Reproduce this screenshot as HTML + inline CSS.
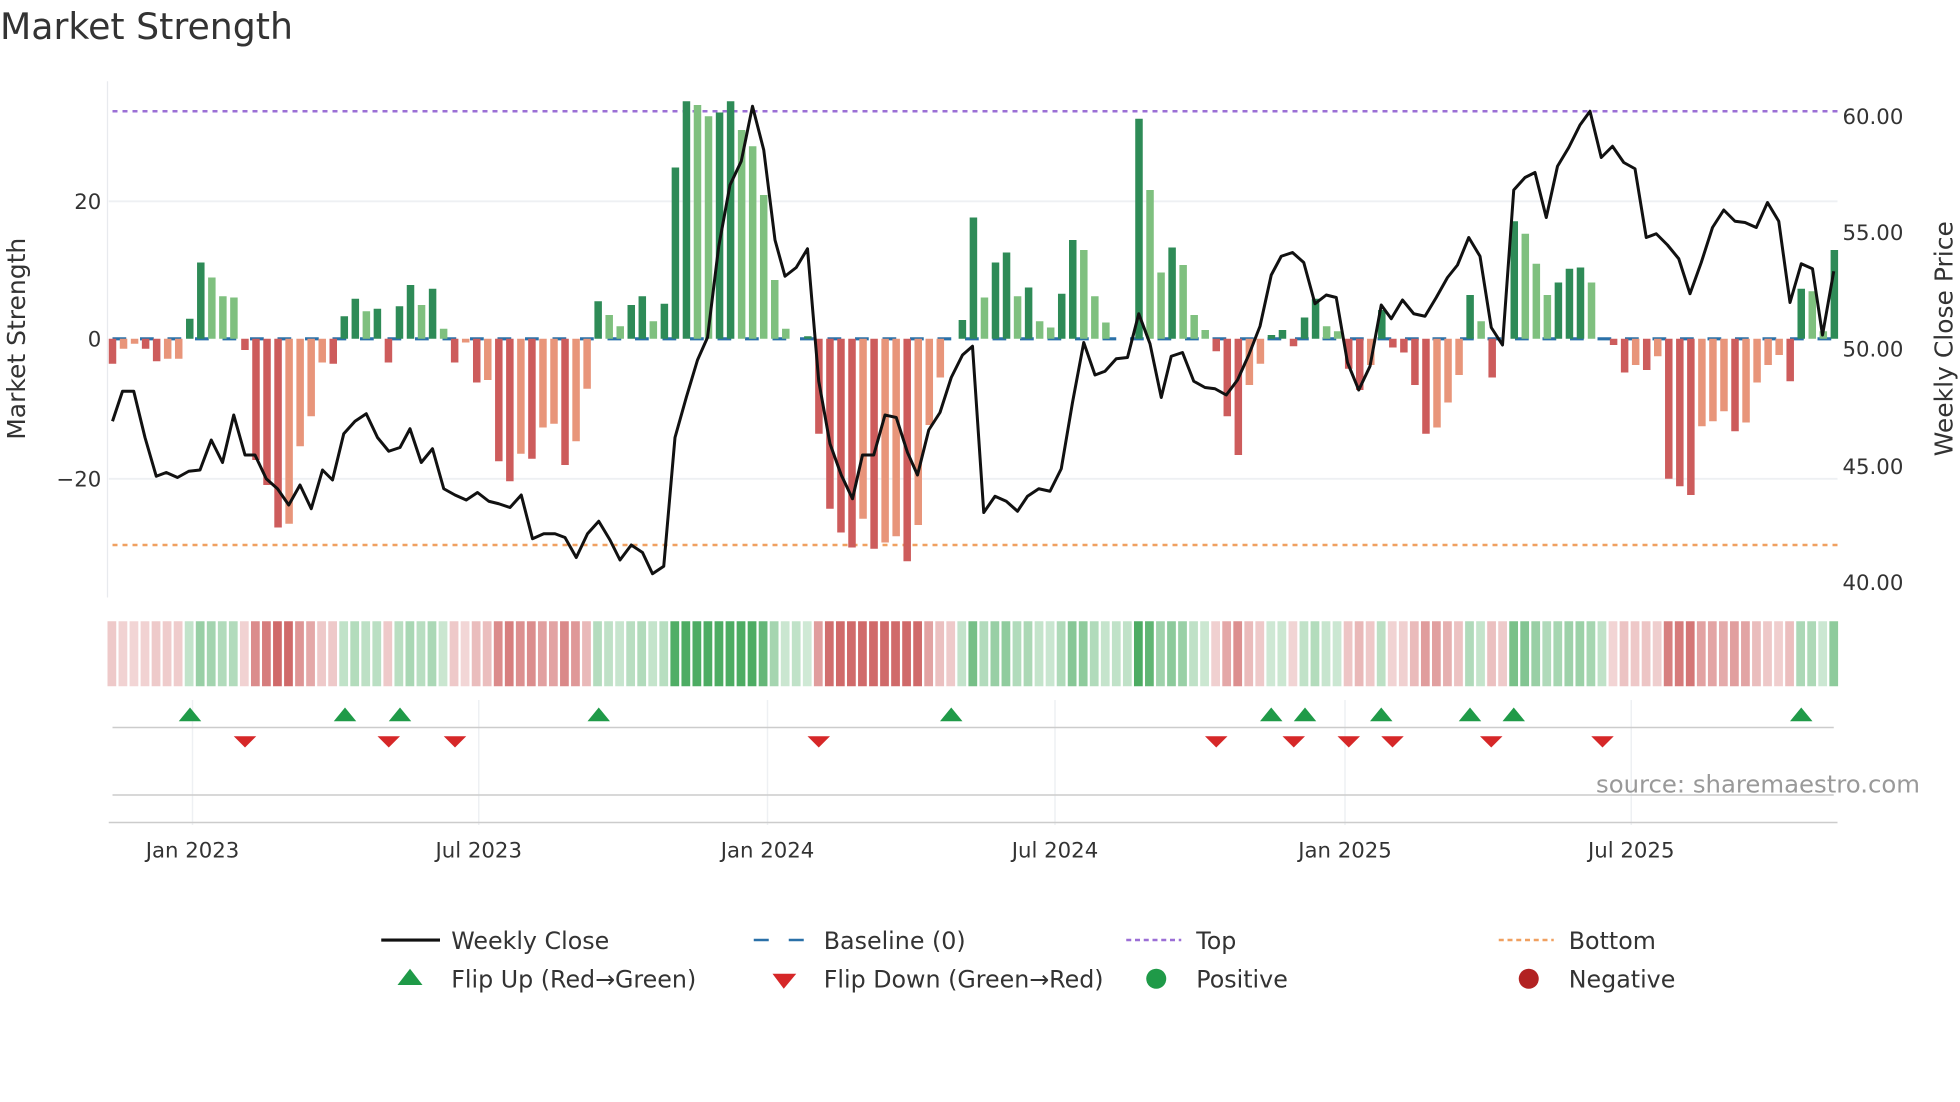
<!DOCTYPE html>
<html><head><meta charset="utf-8"><style>
html,body{margin:0;padding:0;background:#fff;}
svg{display:block;font-family:"DejaVu Sans","Liberation Sans",sans-serif;}
</style></head><body>
<svg id="s" width="1960" height="1102" viewBox="0 0 1568 881.6" xmlns="http://www.w3.org/2000/svg">
<text x="0" y="31" font-size="29" fill="#333">Market Strength</text>
<line x1="86" y1="65" x2="86" y2="478" stroke="#e8eaee" stroke-width="1"/>
<line x1="87" y1="161" x2="1470" y2="161" stroke="#eef0f3" stroke-width="1.5"/>
<line x1="87" y1="383" x2="1470" y2="383" stroke="#eef0f3" stroke-width="1.5"/>
<line x1="90" y1="89" x2="1470" y2="89" stroke="#9b6fd6" stroke-width="2" stroke-dasharray="4 4"/>
<line x1="90" y1="436" x2="1470" y2="436" stroke="#f0a060" stroke-width="2" stroke-dasharray="4 4"/>
<line x1="90" y1="271" x2="1470" y2="271" stroke="#2a70a8" stroke-width="2.5" stroke-dasharray="11 11"/>
<g id="bars"></g>
<g id="heat"></g>
<polyline id="price" fill="none" stroke="#111" stroke-width="2.4" stroke-linejoin="round"/>
<g font-size="17" fill="#333">
<text x="81" y="167" text-anchor="end">20</text>
<text x="81" y="277" text-anchor="end">0</text>
<text x="81" y="389" text-anchor="end">−20</text>
<text x="1474" y="99">60.00</text>
<text x="1474" y="192">55.00</text>
<text x="1474" y="285">50.00</text>
<text x="1474" y="379">45.00</text>
<text x="1474" y="472">40.00</text>
</g>
<text transform="translate(20,271) rotate(-90)" text-anchor="middle" font-size="20" fill="#333">Market Strength</text>
<text transform="translate(1562,271) rotate(-90)" text-anchor="middle" font-size="20" fill="#333">Weekly Close Price</text>
<g stroke="#eef0f3" stroke-width="1.2">
<line x1="154" y1="560" x2="154" y2="660"/><line x1="383" y1="560" x2="383" y2="660"/>
<line x1="614" y1="560" x2="614" y2="660"/><line x1="844" y1="560" x2="844" y2="660"/>
<line x1="1076" y1="560" x2="1076" y2="660"/><line x1="1305" y1="560" x2="1305" y2="660"/>
</g>
<line x1="90" y1="582" x2="1467" y2="582" stroke="#ccc" stroke-width="1.2"/>
<line x1="90" y1="636" x2="1467" y2="636" stroke="#ccc" stroke-width="1.2"/>
<line x1="87" y1="658" x2="1470" y2="658" stroke="#ccc" stroke-width="1.2"/>
<g id="marks"></g>
<text x="1536" y="634" text-anchor="end" font-size="19.5" fill="#999">source: sharemaestro.com</text>
<g font-size="17" fill="#333" text-anchor="middle">
<text x="154" y="686">Jan 2023</text><text x="383" y="686">Jul 2023</text>
<text x="614" y="686">Jan 2024</text><text x="844" y="686">Jul 2024</text>
<text x="1076" y="686">Jan 2025</text><text x="1305" y="686">Jul 2025</text>
</g>
<g font-size="19" fill="#333">
<line x1="305" y1="752" x2="352" y2="752" stroke="#111" stroke-width="2.5"/>
<text x="361" y="759">Weekly Close</text>
<line x1="603" y1="752" x2="648" y2="752" stroke="#2a70a8" stroke-width="2" stroke-dasharray="12 16"/>
<text x="659" y="759">Baseline (0)</text>
<line x1="901" y1="752" x2="945" y2="752" stroke="#9b6fd6" stroke-width="2" stroke-dasharray="4 3"/>
<text x="957" y="759">Top</text>
<line x1="1199" y1="752" x2="1243" y2="752" stroke="#f0a060" stroke-width="2" stroke-dasharray="4 3"/>
<text x="1255" y="759">Bottom</text>
<polygon points="328,775 338,788 318,788" fill="#1f9a48"/>
<text x="361" y="790">Flip Up (Red→Green)</text>
<polygon points="618,779 637,779 627,791" fill="#d62728"/>
<text x="659" y="790">Flip Down (Green→Red)</text>
<circle cx="925" cy="783" r="8" fill="#1f9a48"/>
<text x="957" y="790">Positive</text>
<circle cx="1223" cy="783" r="8" fill="#b22222"/>
<text x="1255" y="790">Negative</text>
</g>
</svg>
<script>
var B=[[-20,'d'],[-8,'l'],[-4,'l'],[-8,'d'],[-18,'d'],[-16,'l'],[-16,'l'],[16,'d'],[61,'d'],[49,'l'],[34,'l'],[33,'l'],[-9,'d'],[-97,'d'],[-117,'d'],[-151,'d'],[-148,'l'],[-86,'l'],[-62,'l'],[-19,'l'],[-20,'d'],[18,'d'],[32,'d'],[22,'l'],[24,'d'],[-19,'d'],[26,'d'],[43,'d'],[27,'l'],[40,'d'],[8,'l'],[-19,'d'],[-3,'l'],[-35,'d'],[-33,'l'],[-98,'d'],[-114,'d'],[-92,'l'],[-96,'d'],[-71,'l'],[-68,'l'],[-101,'d'],[-82,'l'],[-40,'l'],[30,'d'],[19,'l'],[10,'l'],[27,'d'],[34,'d'],[14,'l'],[28,'d'],[137,'d'],[190,'d'],[187,'l'],[178,'l'],[181,'d'],[190,'d'],[167,'l'],[154,'l'],[115,'l'],[47,'l'],[8,'l'],[0,'l'],[2,'d'],
[-76,'d'],[-136,'d'],[-155,'d'],[-167,'d'],[-144,'l'],[-168,'d'],[-163,'l'],[-158,'l'],[-178,'d'],[-149,'l'],[-69,'l'],[-31,'l'],[0,'l'],[15,'d'],[97,'d'],[33,'l'],[61,'d'],[69,'d'],[34,'l'],[41,'d'],[14,'l'],[9,'l'],[36,'d'],[79,'d'],[71,'l'],[34,'l'],[13,'l'],[0,'l'],[0,'l'],[176,'d'],[119,'l'],[53,'l'],[73,'d'],[59,'l'],[19,'l'],[7,'l'],[-10,'d'],[-62,'d'],[-93,'d'],[-37,'l'],[-20,'l'],[3,'d'],[7,'d'],[-6,'d'],[17,'d'],[32,'d'],[10,'l'],[6,'l'],[-24,'d'],
[-41,'d'],[-21,'l'],[23,'d'],[-7,'d'],[-11,'d'],[-37,'d'],[-76,'d'],[-71,'l'],[-51,'l'],[-29,'l'],[35,'d'],[14,'l'],[-31,'d'],[0,'l'],[94,'d'],[84,'l'],[60,'l'],[35,'l'],[45,'d'],[56,'d'],[57,'d'],[45,'l'],[0,'l'],[-5,'d'],[-27,'d'],[-21,'l'],[-25,'d'],[-14,'l'],[-112,'d'],[-118,'d'],[-125,'d'],[-70,'l'],[-66,'l'],[-58,'l'],[-74,'d'],[-67,'l'],[-35,'l'],[-21,'l'],[-13,'l'],[-34,'d'],[40,'d'],[38,'l'],[6,'l'],[71,'d']];
var NS='http://www.w3.org/2000/svg';
function el(t,a,p){var e=document.createElementNS(NS,t);for(var k in a)e.setAttribute(k,a[k]);p.appendChild(e);return e;}
var bars=document.getElementById('bars'),heat=document.getElementById('heat');
var sign=-1;
for(var i=0;i<B.length;i++){
 var v=B[i][0],d=B[i][1]=='d',x=90+8.83*i-3;
 if(v>0){sign=1;el('rect',{x:x,y:271-v,width:6,height:v,fill:d?'#2e8b57':'#7fc07f'},bars);}
 else if(v<0){sign=-1;el('rect',{x:x,y:271,width:6,height:-v,fill:d?'#cd5c5c':'#e8957a'},bars);}
 var m=Math.min(1,Math.abs(v)/140),a=0.22+0.63*m;
 if(v==0)a=0.3;
 el('rect',{x:90+8.83*i-4,y:497,width:7,height:52,fill:sign>0?'#2e9e48':'#c85050','fill-opacity':a},heat);
}
var P=[[90,337],[98,313],[107,313],[116,350],[125,381],[133,378],[142,382],[151,377],[160,376],[169,352],[178,370],[187,332],[196,364],[204,364],[213,383],[222,391],[231,404],[240,388],[249,407],[258,376],[266,384],[275,347],[284,337],[293,331],[302,350],[311,361],[320,358],[328,343],[337,370],[346,359],[355,391],[364,396],[373,400],[382,394],[391,401],[399,403],[408,406],[417,396],[426,431],[435,427],[444,427],[452,430],[461,446],[470,427],[479,417],[488,432],[496,448],[505,436],[514,442],[522,459],[531,453],[540,350],[549,318],[558,288],[566,270],[575,197],[584,148],[593,129],[602,85],[611,120],[620,192],[628,221],[637,214],[646,199],[655,305],[664,355],[673,380],[682,399],[690,364],[699,364],[708,332],[717,334],[726,362],[734,380],[743,344],[752,330],[761,302],[770,284],[778,277],[787,410],[796,397],[805,401],[814,409],[822,397],[831,391],[840,393],[849,375],[858,322],[867,274],[876,300],[884,297],[893,287],[902,286],[911,251],[920,275],[929,318],[937,285],[946,282],[955,305],[964,310],[972,311],[981,316],[990,304],[999,284],[1008,261],[1017,220],[1025,205],[1034,202],[1043,210],[1052,243],[1061,236],[1069,238],[1078,290],[1087,312],[1096,293],[1105,244],[1113,255],[1122,240],[1131,251],[1140,253],[1149,238],[1158,222],[1166,212],[1175,190],[1184,205],[1193,262],[1202,276],[1211,152],[1220,142],[1228,138],[1237,174],[1246,133],[1255,118],[1264,100],[1272,89],[1281,126],[1290,117],[1299,130],[1308,135],[1317,190],[1325,187],[1334,196],[1343,207],[1352,235],[1361,210],[1370,182],[1379,168],[1388,177],[1396,178],[1405,182],[1414,162],[1423,177],[1432,242],[1441,211],[1450,215],[1458,268],[1467,217]];
document.getElementById('price').setAttribute('points',P.map(function(p){return p.join(',')}).join(' '));
var mk=document.getElementById('marks');
[152,276,320,479,761,1017,1044,1105,1176,1211,1441].forEach(function(x){el('polygon',{points:x+',566 '+(x+9)+',577 '+(x-9)+',577',fill:'#1f9a48'},mk);});
[196,311,364,655,973,1035,1079,1114,1193,1282].forEach(function(x){el('polygon',{points:(x-9)+',589 '+(x+9)+',589 '+x+',598',fill:'#d62728'},mk);});
</script>
</body></html>
